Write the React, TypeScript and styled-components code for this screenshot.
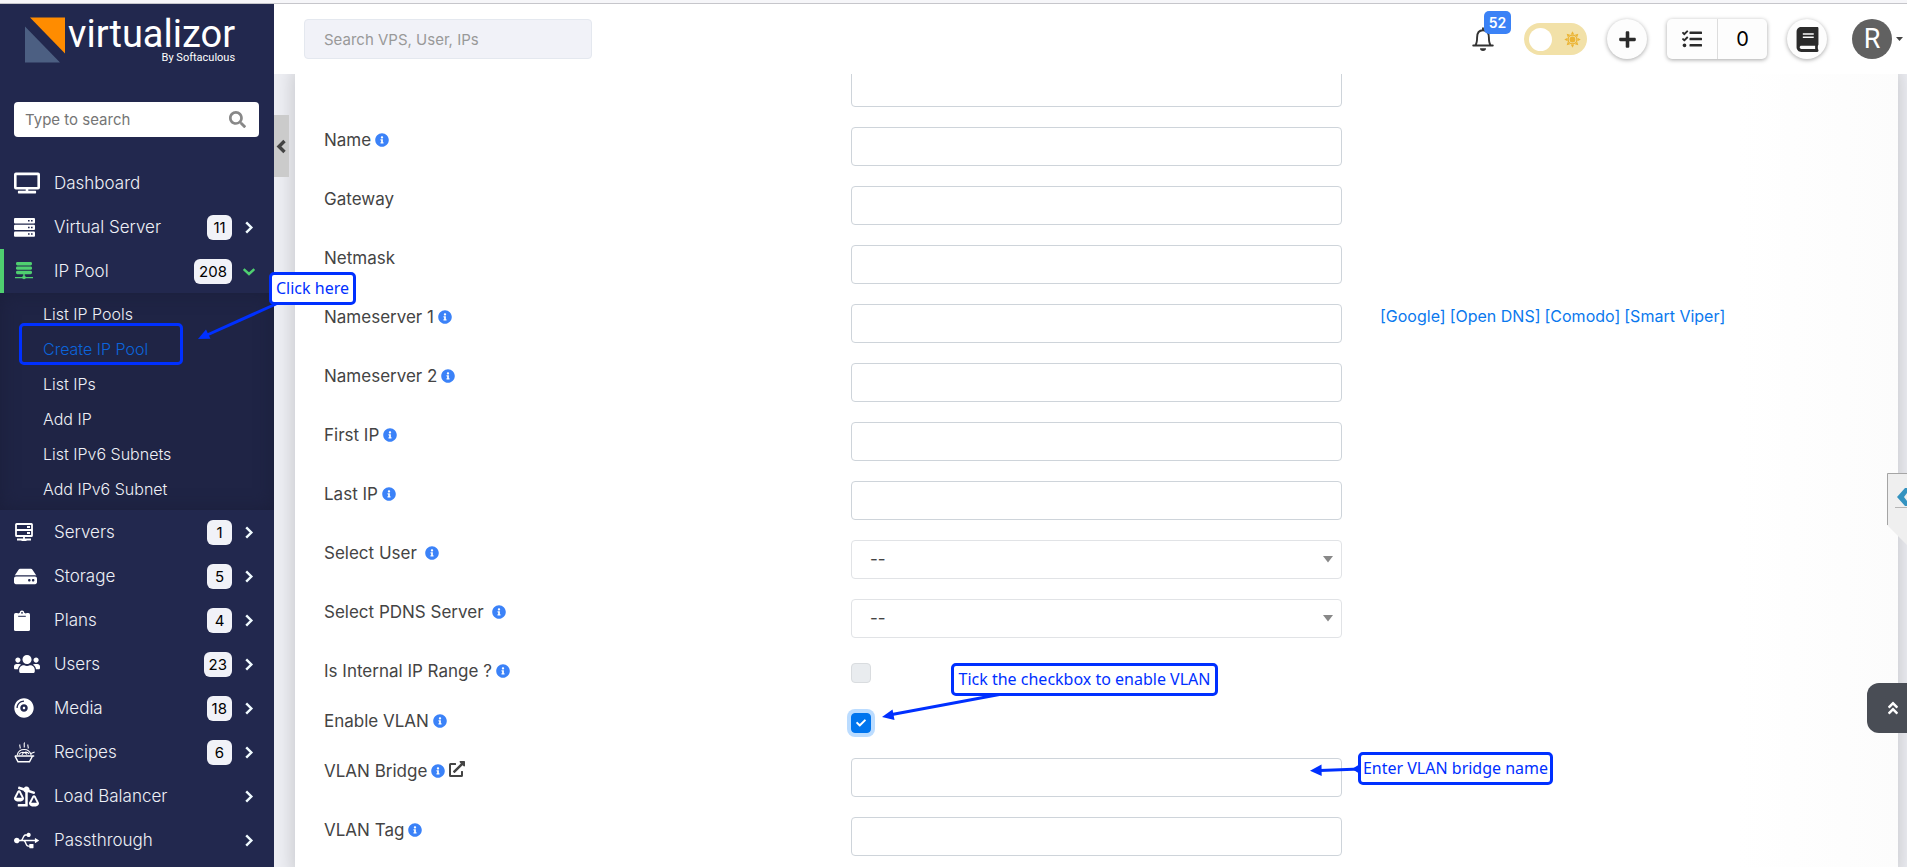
import React from "react";
import styled, { createGlobalStyle, css } from "styled-components";
import {
  FaTv, FaHdd, FaUsers, FaCompactDisc, FaBalanceScaleRight, FaUsb, FaSearch,
  FaInfoCircle, FaExternalLinkAlt, FaPlus, FaTasks, FaBook, FaAngleDoubleUp, FaCheck,
} from "react-icons/fa";

const navy = "#22284e";
const green = "#4fcf70";
const note = "#0030ff";
const sans = `Inter, "Liberation Sans", sans-serif`;

const GlobalStyle = createGlobalStyle`
  *, *::before, *::after { box-sizing: border-box; }
  body { margin: 0; font-family: ${sans}; font-size: 17px; color: #444; background: #fff; }
  button, input, select { font-family: inherit; margin: 0; }
  button { cursor: pointer; padding: 0; border: 0; background: none; color: inherit; }
  a { color: inherit; text-decoration: none; }
`;

const Page = styled.div`
  position: relative;
  display: flex;
  flex-direction: column;
  height: 100vh;
  overflow: hidden;
`;

const TopEdge = styled.div`
  flex: none;
  height: 4px;
  background: #f6f6f9;
  border-bottom: 1px solid #c6c6cb;
`;

const Shell = styled.div`
  display: flex;
  flex: 1;
  min-height: 0;
`;

/* ---- sidebar ---- */

const Sidebar = styled.aside`
  flex: none;
  width: 274px;
  background: ${navy};
  color: #eef0f6;
  overflow: hidden;
`;

const Brand = styled.a`
  display: flex;
  height: 98px;
  padding: 12px 0 0 24px;
  color: #fff;
  font-family: Roboto, sans-serif;
`;

const BrandMark = styled.svg`
  width: 42px;
  height: 48px;
  margin-right: 2px;
`;

const BrandText = styled.span`
  display: flex;
  flex-direction: column;
  align-items: flex-end;
`;

const BrandName = styled.span`
  font-size: 38px;
  line-height: 36px;
`;

const BrandBy = styled.small`
  font-size: 11px;
  line-height: 12px;
`;

const SideSearch = styled.label`
  display: flex;
  align-items: center;
  height: 35px;
  margin: 0 15px 24px 14px;
  padding: 0 13px 0 11px;
  border-radius: 4px;
  background: #fff;
  color: #888;
`;

const SideInput = styled.input`
  flex: 1;
  min-width: 0;
  padding: 0;
  border: 0;
  outline: 0;
  background: none;
  font-size: 15px;
  &::placeholder { color: #757575; opacity: 1; }
`;

const NavList = styled.ul`
  margin: 0;
  padding: 0;
  list-style: none;
`;

const NavLink = styled.a<{ $active?: boolean }>`
  display: flex;
  align-items: center;
  height: 44px;
  padding: 0 18px 0 14px;
  font-weight: 300;
  ${(p) => p.$active && css`
    padding-left: 10px;
    border-left: 4px solid ${green};
  `}
`;

const NavIcon = styled.span<{ $active?: boolean }>`
  display: flex;
  width: 40px;
  color: ${(p) => (p.$active ? green : "#fff")};
`;

const NavText = styled.span`
  flex: 1;
`;

const Count = styled.span`
  min-width: 25px;
  height: 25px;
  padding: 0 5px;
  border-radius: 6px;
  background: #f1f2f8;
  color: #000;
  font-size: 15px;
  font-weight: 400;
  line-height: 25px;
  text-align: center;
`;

const Arrow = styled.span<{ $active?: boolean }>`
  display: flex;
  justify-content: center;
  width: 14px;
  margin-left: 10px;
  color: ${(p) => (p.$active ? green : "#f0fbff")};
`;

const SubMenu = styled(NavList)`
  padding: 4px 0 3px;
  background: #1f2445;
  box-shadow: inset 0 0 18px #1b1f3b;
`;

const SubLink = styled.a<{ $current?: boolean }>`
  display: block;
  padding-left: 43px;
  font-size: 16px;
  font-weight: 300;
  line-height: 35px;
  color: ${(p) => (p.$current ? "#0b64dc" : "inherit")};
`;

/* ---- header ---- */

const Main = styled.main`
  display: flex;
  flex: 1;
  flex-direction: column;
  min-width: 0;
`;

const Header = styled.header`
  display: flex;
  flex: none;
  align-items: center;
  height: 70px;
  padding: 0 4px 0 30px;
  background: #fff;
`;

const HeaderSearch = styled.input`
  width: 288px;
  height: 40px;
  margin-right: auto;
  padding: 0 19px;
  border: 1px solid #e4e8ef;
  border-radius: 4px;
  background: #f1f2f8;
  font-size: 15px;
  &::placeholder { color: #999; opacity: 1; }
`;

const BellButton = styled.button`
  position: relative;
  display: flex;
  margin-right: 30px;
  color: #333;
`;

const BellCount = styled.span`
  position: absolute;
  left: 12px;
  bottom: 17px;
  width: 27px;
  border-radius: 5px;
  background: #3b82f6;
  color: #fff;
  font-size: 14px;
  font-weight: 600;
  line-height: 23px;
`;

const ThemeSwitch = styled.button`
  display: flex;
  align-items: center;
  justify-content: space-between;
  width: 63px;
  height: 32px;
  margin-right: 20px;
  padding: 0 6px 0 5px;
  border-radius: 16px;
  background: #f2e1a8;
  color: #ebb434;
`;

const Knob = styled.span`
  width: 23px;
  height: 23px;
  border-radius: 50%;
  background: #fff;
`;

const raised = css`
  background: #fdfdfd;
  box-shadow: 0 1px 4px rgba(0, 0, 0, 0.35);
  color: #2b2b2b;
`;

const RoundButton = styled.button`
  display: flex;
  align-items: center;
  justify-content: center;
  width: 40px;
  height: 40px;
  border-radius: 50%;
  ${raised}
`;

const TaskGroup = styled.div`
  display: flex;
  height: 40px;
  margin: 0 20px;
  border-radius: 5px;
  ${raised}
`;

const TaskButton = styled.button`
  display: flex;
  align-items: center;
  justify-content: center;
  width: 50px;
  color: #2b2b2b;
  font-size: 20px;
  & + & {
    border-left: 1px solid #ddd;
    color: #000;
  }
`;

const UserButton = styled.button`
  display: flex;
  align-items: center;
  gap: 4px;
  margin-left: 25px;
  color: #333;
`;

const Avatar = styled.span`
  width: 40px;
  border-radius: 50%;
  background: #616161;
  color: #fff;
  font-family: Roboto, sans-serif;
  font-size: 27px;
  line-height: 40px;
`;

/* ---- form ---- */

const Body = styled.div`
  position: relative;
  flex: 1;
  min-height: 0;
  padding: 0 9px 0 21px;
  overflow: hidden;
  background: #eeeff4;
`;

const Card = styled.form`
  margin-top: -6px;
  padding: 0 29px;
  background: linear-gradient(to right, #fff 90%, #fcfcfc);
  box-shadow: 0 0 20px rgba(0, 0, 0, 0.2);
`;

const Row = styled.div<{ $compact?: boolean }>`
  display: grid;
  grid-template-columns: repeat(3, 1fr);
  column-gap: 36px;
  height: ${(p) => (p.$compact ? 50 : 59)}px;
`;

const LabelCell = styled.div<{ $wide?: boolean }>`
  display: flex;
  align-items: center;
  gap: ${(p) => (p.$wide ? 8 : 4)}px;
  height: 26px;
`;

const InfoIcon = styled(FaInfoCircle)`
  color: #3b82f8;
`;

const control = css`
  width: 100%;
  height: 39px;
  border-radius: 4px;
  background: #fff;
`;

const TextInput = styled.input`
  ${control}
  padding: 0 12px;
  border: 1px solid #ced4da;
  font-size: 16px;
`;

const SelectWrap = styled.div`
  position: relative;
  height: 39px;
`;

const Select = styled.select`
  ${control}
  padding: 0 18px 2px;
  border: 1px solid #e1e3e6;
  appearance: none;
  color: #444;
  font-size: 17px;
`;

const SelectCaret = styled.svg`
  position: absolute;
  top: 16px;
  right: 9px;
  width: 10px;
  height: 7px;
  pointer-events: none;
`;

const CheckWrap = styled.span`
  display: grid;
  place-items: center;
  width: 20px;
  height: 20px;
  margin-top: 5px;
  color: #fff;
  & > * { grid-area: 1 / 1; }
  & > svg { pointer-events: none; }
`;

const CheckBox = styled.input`
  width: 20px;
  height: 20px;
  border: 1px solid #d9dcdf;
  border-radius: 4px;
  appearance: none;
  background: #e9ecef;
  &:checked {
    border-color: #0075ee;
    background: #0075ee;
    box-shadow: 0 0 0 4px #bbdcff;
  }
`;

const Presets = styled.div`
  display: flex;
  gap: 4px;
  height: 24px;
  align-items: center;
  padding-left: 2px;
  color: #0a78ee;
  font-size: 16px;
  white-space: nowrap;
`;

/* ---- floating parts ---- */

const CollapseTab = styled.button`
  position: absolute;
  top: 41px;
  left: 0;
  display: flex;
  align-items: center;
  justify-content: center;
  width: 15px;
  height: 62px;
  background: #cbcbcb;
  color: #444;
`;

const SideTab = styled.svg`
  position: absolute;
  top: 473px;
  right: 0;
  width: 20px;
  height: 72px;
`;

const ToTop = styled.button`
  position: absolute;
  top: 683px;
  right: 0;
  display: flex;
  align-items: center;
  justify-content: center;
  width: 40px;
  height: 50px;
  padding-left: 12px;
  border-radius: 12px 0 0 12px;
  background: #494d55;
  color: #fff;
`;

const Note = styled.div<{ $x: number; $y: number; $w: number; $h?: number }>`
  position: absolute;
  left: ${(p) => p.$x}px;
  top: ${(p) => p.$y}px;
  width: ${(p) => p.$w}px;
  height: ${(p) => p.$h || 33}px;
  border: 3px solid ${note};
  border-radius: 5px;
  background: ${(p) => (p.$h ? "none" : "#fff")};
  color: ${note};
  font-family: "Noto Sans", sans-serif;
  font-size: 16px;
  line-height: 27px;
  text-align: center;
  white-space: nowrap;
`;

const Pointer = styled.svg<{ $x: number; $y: number }>`
  position: absolute;
  left: ${(p) => p.$x}px;
  top: ${(p) => p.$y}px;
  fill: ${note};
  stroke: ${note};
  pointer-events: none;
`;

/* ---- icons the packages lack ---- */

const ServerStack = () => (
  <svg width="21" height="19" viewBox="0 0 21 19" fill="#fff">
    {[0, 6.7, 13.4].map((y) => (
      <g key={y}>
        <rect y={y} width="21" height="5.4" rx="1" />
        <path d={`M14 ${y + 2.7}h1.6M17 ${y + 2.7}h1.6`} stroke={navy} strokeWidth="1.5" />
      </g>
    ))}
  </svg>
);

const PoolIcon = () => (
  <svg width="20" height="18" viewBox="0 0 20 18" fill={green}>
    <rect x="2" y="0" width="16" height="3.4" rx="1.4" />
    <rect x="2" y="4.4" width="16" height="3.4" rx="1.4" />
    <rect x="2" y="8.8" width="16" height="3.4" rx="1.4" />
    <path d="M9.3 12h1.4v2H9.3zM1 15h18v1.2H1z" />
    <circle cx="10" cy="15.4" r="1.8" />
  </svg>
);

const ServersIcon = () => (
  <svg width="20" height="19" viewBox="0 0 20 19" fill="none" stroke="#fff" strokeWidth="1.8">
    <rect x="2" y="1" width="16" height="6" rx=".6" />
    <rect x="2" y="7" width="16" height="6" rx=".6" />
    <path d="M13 4h3M13 10h3M10 13v3" />
    <path d="M3 16.500h14M7.500 17h5" />
  </svg>
);

const ClipIcon = () => (
  <svg width="16" height="21" viewBox="0 0 16 21">
    <rect y="3" width="16" height="18" rx="1.6" fill="#fff" />
    <path d="M4.500 6V3h1.200a2.300 2.600 0 0 1 4.600 0h1.200v3z" fill="#fff" />
    <path d="M4.200 6.300h7.600M4.200 2.500v1M11.800 2.500v1" stroke={navy} strokeWidth="1" />
    <circle cx="8" cy="2.800" r="0.9" fill={navy} />
  </svg>
);

const BowlIcon = () => (
  <svg width="21" height="21" viewBox="0 0 21 21" fill="none" stroke="#fff" strokeWidth="1.1">
    <path d="M.8 14h19.400M1 14l3 5.800h11.500l3-5.800" strokeWidth="1.500" />
    <path d="M3.200 13c1-4 4-5.500 7-5.500s5.800 1.600 7 5.500M5 12.500c1.500-3 6-3 8 0M8 12.800c1-3 5-3.600 7-1M17 11.500l3.600-1.500" />
    <path d="M6 6.500c1-1.500-1-2.200 0-4M10 5.500c1-1.500-.6-3 .6-5M14 6.500c1-1.500-.8-2.200 0-4" />
  </svg>
);

const BellIcon = () => (
  <svg width="22" height="24" viewBox="0 0 22 24" fill="none" stroke="#333" strokeWidth="1.9" strokeLinecap="round">
    <path d="M11 3V1.200M1.200 18.500h19.600M3.500 18c1.500-2 1.600-4 1.600-7.500C5.100 6 7.300 3.200 11 3.200s5.900 2.800 5.900 7.300c0 3.500.1 5.500 1.600 7.500" />
    <path d="M8 21.300h6a3 2.600 0 0 1-6 0z" fill="#333" stroke="none" />
  </svg>
);

const SunIcon = () => (
  <svg width="17" height="17" viewBox="0 0 17 17" fill="currentColor">
    {[0, 45, 90, 135, 180, 225, 270, 315].map((a) => (
      <path key={a} d="M8.500 .3l1.700 3.200H6.800z" transform={`rotate(${a} 8.5 8.5)`} />
    ))}
    <circle cx="8.500" cy="8.500" r="4.400" fill="none" stroke="currentColor" strokeWidth="1.300" />
    <circle cx="8.500" cy="8.500" r="2.900" />
  </svg>
);

const chevrons = {
  right: "M4.500 2l5.500 5.500L4.500 13",
  down: "M1.800 5l5.700 5.200L13.200 5",
  left: "M10.500 2L5 7.500l5.500 5.500",
};

const Chevron = ({ to, weight = 2.6 }: { to: keyof typeof chevrons; weight?: number }) => (
  <svg width="15" height="15" viewBox="0 0 15 15" fill="none" stroke="currentColor" strokeWidth={weight}>
    <path d={chevrons[to]} />
  </svg>
);

/* ---- data ---- */

type NavEntry = { text: string; icon: React.ReactNode; count?: number; plain?: boolean; sub?: string[] };

const nav: NavEntry[] = [
  { text: "Dashboard", icon: <FaTv size={26} />, plain: true },
  { text: "Virtual Server", icon: <ServerStack />, count: 11 },
  {
    text: "IP Pool", icon: <PoolIcon />, count: 208,
    sub: ["List IP Pools", "Create IP Pool", "List IPs", "Add IP", "List IPv6 Subnets", "Add IPv6 Subnet"],
  },
  { text: "Servers", icon: <ServersIcon />, count: 1 },
  { text: "Storage", icon: <FaHdd size={23} />, count: 5 },
  { text: "Plans", icon: <ClipIcon />, count: 4 },
  { text: "Users", icon: <FaUsers size={26} />, count: 23 },
  { text: "Media", icon: <FaCompactDisc size={20} />, count: 18 },
  { text: "Recipes", icon: <BowlIcon />, count: 6 },
  { text: "Load Balancer", icon: <FaBalanceScaleRight size={25} /> },
  { text: "Passthrough", icon: <FaUsb size={25} /> },
];

type FieldDef = { id: string; text?: string; kind?: "select" | "check"; info?: boolean; checked?: boolean; link?: boolean };

const fields: FieldDef[] = [
  { id: "first" },
  { id: "name", text: "Name", info: true },
  { id: "gateway", text: "Gateway" },
  { id: "netmask", text: "Netmask" },
  { id: "ns1", text: "Nameserver 1", info: true },
  { id: "ns2", text: "Nameserver 2", info: true },
  { id: "firstip", text: "First IP", info: true },
  { id: "lastip", text: "Last IP", info: true },
  { id: "user", text: "Select User", info: true, kind: "select" },
  { id: "pdns", text: "Select PDNS Server", info: true, kind: "select" },
  { id: "internal", text: "Is Internal IP Range ?", info: true, kind: "check" },
  { id: "vlan", text: "Enable VLAN", info: true, kind: "check", checked: true },
  { id: "bridge", text: "VLAN Bridge", info: true, link: true },
  { id: "tag", text: "VLAN Tag", info: true },
];

function Control({ field }: { field: FieldDef }) {
  if (field.kind === "select") {
    return (
      <SelectWrap>
        <Select id={field.id}><option>--</option></Select>
        <SelectCaret viewBox="0 0 10 7"><path d="M0 0h10L5 6.500z" fill="#888" /></SelectCaret>
      </SelectWrap>
    );
  }
  if (field.kind === "check") {
    return (
      <CheckWrap>
        <CheckBox id={field.id} type="checkbox" defaultChecked={field.checked} />
        {field.checked && <FaCheck size={10} />}
      </CheckWrap>
    );
  }
  return <TextInput id={field.id} type="text" aria-label={field.text || "IP Pool"} />;
}

export default function App() {
  return (
    <Page>
      <GlobalStyle />
      <TopEdge />
      <Shell>
        <Sidebar>
          <Brand href="#">
            <BrandMark viewBox="0 0 42 48">
              <path d="M6 1.500h35V37.500z" fill="#ff8c00" />
              <path d="M1 10.500V46.500h35z" fill="#4c5f82" />
            </BrandMark>
            <BrandText>
              <BrandName>virtualizor</BrandName>
              <BrandBy>By Softaculous</BrandBy>
            </BrandText>
          </Brand>
          <SideSearch>
            <SideInput type="text" placeholder="Type to search" aria-label="Type to search" />
            <FaSearch size={17} />
          </SideSearch>
          <NavList>
            {nav.map((n) => (
              <li key={n.text}>
                <NavLink href="#" $active={!!n.sub}>
                  <NavIcon $active={!!n.sub}>{n.icon}</NavIcon>
                  <NavText>{n.text}</NavText>
                  {n.count !== undefined && <Count>{n.count}</Count>}
                  {!n.plain && (
                    <Arrow $active={!!n.sub}>
                      <Chevron to={n.sub ? "down" : "right"} />
                    </Arrow>
                  )}
                </NavLink>
                {n.sub && (
                  <SubMenu>
                    {n.sub.map((s) => (
                      <li key={s}><SubLink href="#" $current={s === "Create IP Pool"}>{s}</SubLink></li>
                    ))}
                  </SubMenu>
                )}
              </li>
            ))}
          </NavList>
        </Sidebar>

        <Main>
          <Header>
            <HeaderSearch type="text" placeholder="Search VPS, User, IPs" aria-label="Search VPS, User, IPs" />
            <BellButton aria-label="Notifications">
              <BellIcon />
              <BellCount>52</BellCount>
            </BellButton>
            <ThemeSwitch aria-label="Theme"><Knob /><SunIcon /></ThemeSwitch>
            <RoundButton aria-label="Add"><FaPlus size={19} /></RoundButton>
            <TaskGroup>
              <TaskButton aria-label="Tasks"><FaTasks size={20} /></TaskButton>
              <TaskButton>0</TaskButton>
            </TaskGroup>
            <RoundButton aria-label="Documentation"><FaBook size={25} /></RoundButton>
            <UserButton>
              <Avatar>R</Avatar>
              <svg width="7" height="4" viewBox="0 0 7 4"><path d="M0 0h7L3.500 4z" fill="#444" /></svg>
            </UserButton>
          </Header>

          <Body>
            <Card>
              {fields.map((f) => (
                <Row key={f.id} $compact={f.kind === "check"}>
                  <LabelCell $wide={f.kind === "select"}>
                    {f.text && <label htmlFor={f.id}>{f.text}</label>}
                    {f.info && <InfoIcon size={14} />}
                    {f.link && <a href="#" aria-label="Open bridges"><FaExternalLinkAlt size={16} /></a>}
                  </LabelCell>
                  <Control field={f} />
                  {f.id === "ns1" && (
                    <Presets>
                      <a href="#">[Google]</a>
                      <a href="#">[Open DNS]</a>
                      <a href="#">[Comodo]</a>
                      <a href="#">[Smart Viper]</a>
                    </Presets>
                  )}
                </Row>
              ))}
            </Card>
            <CollapseTab aria-label="Collapse sidebar"><Chevron to="left" weight={3.4} /></CollapseTab>
          </Body>
        </Main>
      </Shell>

      <SideTab viewBox="0 0 20 72">
        <path d="M0 0h20v72L0 52z" fill="#efefef" />
        <path d="M.5 52V.5H20" fill="none" stroke="#a5a5a5" />
        <path d="M8 34.500h12" stroke="#b5b5b5" />
        <path d="M20 15h-2l-8 9 8 9h2v-5l-3-4 3-4z" fill="#3493c0" />
      </SideTab>
      <ToTop aria-label="Back to top"><FaAngleDoubleUp size={16} /></ToTop>

      <Pointer $x={196} $y={300} width="82" height="42">
        <path d="M80 4L10 35.500" strokeWidth="3" />
        <path d="M2 39l8-9.500 4.500 9.200z" stroke="none" />
      </Pointer>
      <Pointer $x={880} $y={690} width="126" height="32">
        <path d="M122 4L12 24.500" strokeWidth="3" />
        <path d="M2 27l10.500-7.500 2 10.500z" stroke="none" />
      </Pointer>
      <Pointer $x={1308} $y={760} width="54" height="20">
        <path d="M52 9L12 10.500" strokeWidth="3" />
        <path d="M2 10.800l11.500-6.300.2 11.500zM44 9l8-5v10z" stroke="none" />
      </Pointer>
      <Note $x={269} $y={272} $w={87}>Click here</Note>
      <Note $x={19} $y={323} $w={164} $h={42} />
      <Note $x={951} $y={663} $w={267}>Tick the checkbox to enable VLAN</Note>
      <Note $x={1358} $y={752} $w={195}>Enter VLAN bridge name</Note>
    </Page>
  );
}
